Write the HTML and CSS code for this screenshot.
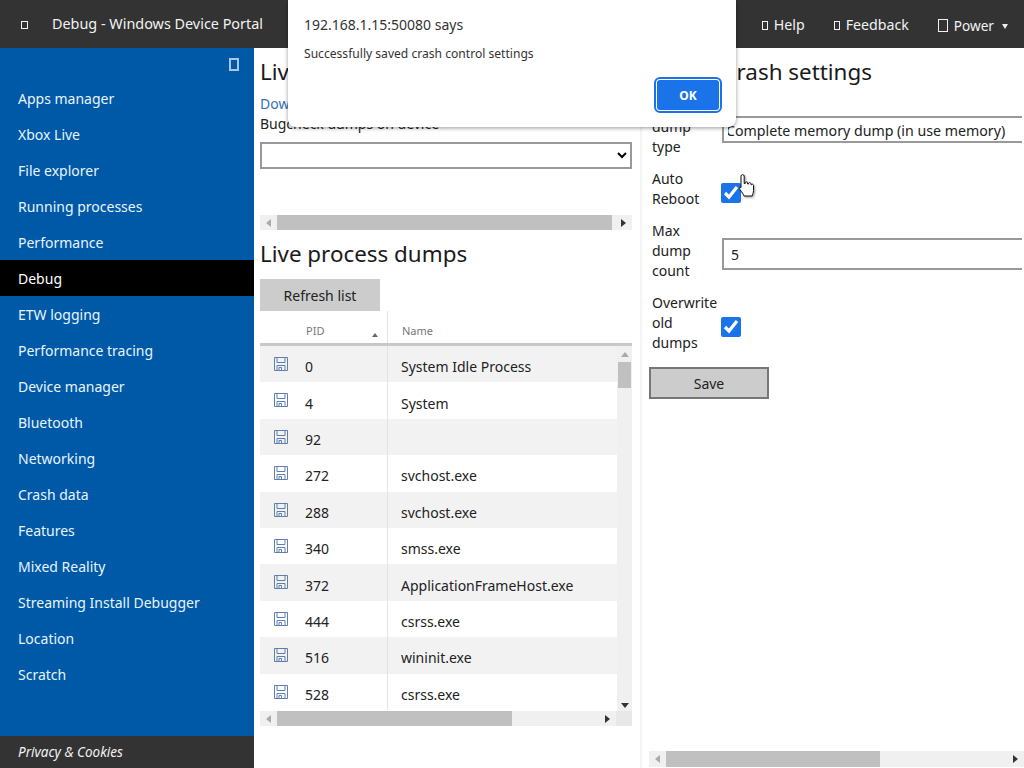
FILE: index.html
```html
<!DOCTYPE html>
<html lang="en">
<head>
<meta charset="utf-8">
<title>Debug - Windows Device Portal</title>
<link rel="stylesheet" href="styles.css">
</head>
<body>
<div class="app">
  <header class="topbar">
    <span class="tofu tofu-logo"></span>
    <span class="title">Debug - Windows Device Portal</span>
    <nav class="topnav">
      <span class="topitem"><span class="tofu tofu-small"></span>Help</span>
      <span class="topitem"><span class="tofu tofu-small"></span>Feedback</span>
      <span class="topitem power"><span class="tofu tofu-large"></span>Power<span class="caret"></span></span>
    </nav>
  </header>
  <div class="body">
    <aside class="sidebar">
      <div class="collapse"><span class="tofu tofu-collapse"></span></div>
      <ul class="menu">
        <li>Apps manager</li>
        <li>Xbox Live</li>
        <li>File explorer</li>
        <li>Running processes</li>
        <li>Performance</li>
        <li class="active">Debug</li>
        <li>ETW logging</li>
        <li>Performance tracing</li>
        <li>Device manager</li>
        <li>Bluetooth</li>
        <li>Networking</li>
        <li>Crash data</li>
        <li>Features</li>
        <li>Mixed Reality</li>
        <li>Streaming Install Debugger</li>
        <li>Location</li>
        <li>Scratch</li>
      </ul>
      <div class="privacy">Privacy &amp; Cookies</div>
    </aside>
    <main class="main">
      <div class="col-left">
        <section class="kernel">
          <h2>Live kernel dumps</h2>
          <a class="link">Download live kernel dump</a>
          <div class="field-label">Bugcheck dumps on device</div>
          <select class="select-wide"><option></option></select>
          <div class="hscroll hscroll-kernel">
            <span class="arrow arrow-left"></span>
            <span class="thumb"></span>
            <span class="arrow arrow-right"></span>
          </div>
        </section>
        <section class="process">
          <h2>Live process dumps</h2>
          <button class="btn">Refresh list</button>
          <div class="thead">
            <div class="th th-pid"><span>PID</span><span class="sort"></span></div>
            <div class="th th-name">Name</div>
          </div>
          <div class="tbody">
            <div class="rows">
              <div class="row"><div class="c-pid"><svg class="save"><use href="#floppy"/></svg>0</div><div class="c-name">System Idle Process</div></div>
              <div class="row"><div class="c-pid"><svg class="save"><use href="#floppy"/></svg>4</div><div class="c-name">System</div></div>
              <div class="row"><div class="c-pid"><svg class="save"><use href="#floppy"/></svg>92</div><div class="c-name"></div></div>
              <div class="row"><div class="c-pid"><svg class="save"><use href="#floppy"/></svg>272</div><div class="c-name">svchost.exe</div></div>
              <div class="row"><div class="c-pid"><svg class="save"><use href="#floppy"/></svg>288</div><div class="c-name">svchost.exe</div></div>
              <div class="row"><div class="c-pid"><svg class="save"><use href="#floppy"/></svg>340</div><div class="c-name">smss.exe</div></div>
              <div class="row"><div class="c-pid"><svg class="save"><use href="#floppy"/></svg>372</div><div class="c-name">ApplicationFrameHost.exe</div></div>
              <div class="row"><div class="c-pid"><svg class="save"><use href="#floppy"/></svg>444</div><div class="c-name">csrss.exe</div></div>
              <div class="row"><div class="c-pid"><svg class="save"><use href="#floppy"/></svg>516</div><div class="c-name">wininit.exe</div></div>
              <div class="row"><div class="c-pid"><svg class="save"><use href="#floppy"/></svg>528</div><div class="c-name">csrss.exe</div></div>
            </div>
            <div class="vscroll">
              <span class="arrow arrow-up"></span>
              <span class="vthumb"></span>
              <span class="arrow arrow-down"></span>
            </div>
          </div>
          <div class="hscroll hscroll-table">
            <span class="arrow arrow-left"></span>
            <span class="thumb"></span>
            <span class="arrow arrow-right"></span>
            <span class="corner"></span>
          </div>
        </section>
      </div>
      <div class="col-right">
        <section class="settings">
          <h2>Kernel crash settings</h2>
          <div class="form-row">
            <label class="form-label">Crash dump type</label>
            <select class="form-select"><option>Complete memory dump (in use memory)</option></select>
          </div>
          <div class="form-row">
            <label class="form-label">Auto Reboot</label>
            <input class="check" type="checkbox" checked>
          </div>
          <div class="form-row">
            <label class="form-label">Max dump count</label>
            <input class="form-input" type="text" value="5">
          </div>
          <div class="form-row">
            <label class="form-label">Overwrite old dumps</label>
            <input class="check" type="checkbox" checked>
          </div>
          <button class="btn btn-save">Save</button>
        </section>
        <div class="hscroll hscroll-page">
          <span class="arrow arrow-left"></span>
          <span class="thumb"></span>
          <span class="arrow arrow-right"></span>
        </div>
      </div>
    </main>
  </div>
</div>

<div class="dialog" role="alertdialog">
  <div class="dialog-origin">192.168.1.15:50080 says</div>
  <div class="dialog-msg">Successfully saved crash control settings</div>
  <div class="dialog-actions"><button class="ok">OK</button></div>
</div>

<svg class="cursor" viewBox="0 0 15 26" width="15" height="26">
  <path d="M2 2c0-1.800 3.200-1.800 3.200 0v7.500l1 .1V8.800c0-1.200 2.300-1.200 2.400 0v1.200l.9.100V9.500c0-1.200 2.300-1.100 2.400.1v1l.7.100c.9-.9 1.900-.3 1.900.8v5c0 2.500-1 3.500-1.300 5.500H5C4.500 20 3 18.500 1 15.500c-1-1.500.2-2.800 1-1.800V2z" fill="#fff" stroke="#111" stroke-width="1"/>
</svg>

<svg class="defs" width="0" height="0">
  <symbol id="floppy" viewBox="0 0 14 14">
    <path d="M.5.5h13v13H.5z M3 .5v5h8v-5 M3 13.500V8.500h8v5 M5 13.500v-3h2.500v3" fill="none" stroke="#5f7fae" stroke-width="1"/>
  </symbol>
</svg>
</body>
</html>
```
FILE: styles.css
```css
* { box-sizing: border-box; }
html, body { margin: 0; height: 100%; overflow: hidden; }
body {
  position: relative;
  font-family: "Noto Sans", "Open Sans", sans-serif;
  font-size: 14px;
  line-height: 20px;
  color: #222;
  background: #fff;
}
.app { display: flex; flex-direction: column; height: 768px; }

.topbar {
  flex: 0 0 48px;
  display: flex;
  align-items: center;
  background: #333;
  color: #f2f2f2;
}
.tofu { display: inline-block; border: 1px solid currentColor; flex: none; }
.tofu-logo { width: 7px; height: 8px; margin: 2px 0 0 21px; }
.title { margin-left: 24px; font-size: 14.400px; }
.topnav { display: flex; margin-left: auto; align-items: center; padding-top: 2px; }
.topitem { display: flex; align-items: center; font-size: 14.200px; margin-right: 29px; }
.tofu-small { width: 6px; height: 9px; margin-right: 6px; }
.tofu-large { width: 10px; height: 13px; margin-right: 6px; margin-top: -2px; border-width: 1.500px; }
.power { margin-right: 16px; padding-top: 2px; font-size: 13.600px; }
.caret {
  width: 0; height: 0;
  margin-left: 8px;
  border-left: 3.500px solid transparent;
  border-right: 3.500px solid transparent;
  border-top: 5px solid #eee;
}

.body { flex: 1; display: flex; min-height: 0; }
.sidebar {
  flex: 0 0 254px;
  display: flex;
  flex-direction: column;
  background: #0059a6;
  color: #e8f4ff;
}
.collapse { height: 32px; display: flex; justify-content: flex-end; padding: 10px 15px 0 0; }
.tofu-collapse { width: 10px; height: 13px; border: 2px solid #a9c6e3; }
.menu { list-style: none; margin: 0; padding: 0; flex: 1; }
.menu li { height: 36px; line-height: 38px; padding-left: 18px; }
.menu li.active { background: #000; color: #fff; }
.privacy {
  height: 32px;
  line-height: 32px;
  padding-left: 18px;
  background: #333;
  color: #f2f2f2;
  font-style: italic;
  font-size: 13.500px;
}

.main { flex: 1; display: flex; min-width: 0; }
h2 { margin: 0; font-weight: 400; font-size: 22.400px; line-height: 32px; color: #1a1a1a; }
.col-left { flex: 0 0 386px; padding: 8px 0 0 6px; }
.kernel, .process { width: 372px; }
.link { display: block; margin-top: 6px; color: #2f72b8; }
.select-wide {
  display: block;
  width: 372px;
  height: 27px;
  margin-top: 8px;
  border: 2px solid #999;
  background: #fff;
  font: inherit;
}
.hscroll { display: flex; align-items: center; background: #f0f0f0; }
.hscroll-kernel { margin-top: 46px; height: 15px; }
.hscroll-kernel .thumb { width: 335px; }
.thumb { height: 100%; background: #c0c0c0; }
.arrow { width: 0; height: 0; flex: none; }
.arrow-left {
  margin: 0 6px 0 6px;
  border-top: 4px solid transparent;
  border-bottom: 4px solid transparent;
  border-right: 5px solid #aaa;
}
.arrow-right {
  margin-left: auto;
  margin-right: 6px;
  border-top: 4px solid transparent;
  border-bottom: 4px solid transparent;
  border-left: 5px solid #333;
}
.process { margin-top: 8px; }
.btn {
  display: block;
  width: 120px;
  height: 32px;
  margin-top: 9px;
  padding: 1px 0 0;
  border: 0;
  background: #ccc;
  color: #222;
  font: inherit;
}
.thead { display: flex; height: 35px; border-bottom: 3px solid #c8c8c8; font-size: 11px; color: #777; }
.th { display: flex; align-items: center; padding-top: 8px; }
.th-pid { position: relative; flex: 0 0 128px; padding-left: 46px; border-right: 1px solid #e4e4e4; }
.sort {
  position: absolute;
  right: 9px;
  top: 22px;
  border-left: 3px solid transparent;
  border-right: 3px solid transparent;
  border-bottom: 4px solid #666;
}
.th-name { padding-left: 14px; }
.tbody { display: flex; height: 365px; overflow: hidden; }
.rows { flex: 0 0 357px; }
.row { display: flex; height: 36.400px; }
.row:nth-child(odd) { background: #f2f2f2; }
.row:nth-child(even) { background: #fff; }
.c-pid {
  position: relative;
  flex: 0 0 128px;
  padding: 11.200px 0 0 45px;
  border-right: 1px solid #e4e4e4;
}
.save { position: absolute; left: 14px; top: 11px; width: 14px; height: 14px; }
.c-name { padding: 11.200px 0 0 13px; }
.vscroll {
  flex: 1;
  display: flex;
  flex-direction: column;
  align-items: center;
  background: #f0f0f0;
}
.arrow-up {
  margin-top: 6px;
  margin-bottom: 5px;
  border-left: 4px solid transparent;
  border-right: 4px solid transparent;
  border-bottom: 5px solid #aaa;
}
.vthumb { width: 13px; height: 26px; background: #c0c0c0; }
.arrow-down {
  margin-top: auto;
  margin-bottom: 3px;
  border-left: 4px solid transparent;
  border-right: 4px solid transparent;
  border-top: 5px solid #333;
}
.hscroll-table { height: 15px; }
.hscroll-table .thumb { width: 235px; }
.corner { width: 16px; height: 100%; background: #e8e8e8; }

.col-right {
  flex: 1;
  min-width: 0;
  display: flex;
  flex-direction: column;
  border-left: 2px solid #f4f4f4;
}
.settings { flex: 1; min-height: 0; padding: 8px 0 0 10px; margin-right: 2px; overflow: hidden; }
.settings h2 { margin-bottom: 9px; }
.form-row { display: flex; align-items: center; margin-bottom: 12px; }
.form-label { flex: 0 0 70px; width: 70px; padding-right: 4px; }
.form-select, .form-input {
  flex: 0 0 320px;
  width: 320px;
  border: 2px solid #999;
  background: #fff;
  font: inherit;
  color: #222;
}
.form-select { height: 27px; margin-top: 5px; padding-top: 2px; font-size: 14.200px; text-indent: -2px; }
.form-input { height: 32px; margin-top: 6px; padding: 0 7px; }
.check {
  width: 20px;
  height: 20px;
  margin: 8px 0 0 -1px;
  accent-color: #1a73e8;
}
.btn-save { margin: 14px 0 0 -3px; border: 2px solid #777; }
.hscroll-page { flex: 0 0 16px; margin: 0 0 1px 7px; }
.hscroll-page .thumb { width: 214px; }

.dialog {
  position: absolute;
  left: 288px;
  top: 0;
  width: 448px;
  height: 127px;
  padding: 15px 16px 0;
  background: #fff;
  border-radius: 0 0 8px 8px;
  box-shadow: 0 1px 4px rgba(0,0,0,.4);
  color: #333;
}
.dialog-origin { font-size: 14px; }
.dialog-msg { margin-top: 9px; font-size: 12.100px; }
.dialog-actions { position: absolute; right: 15px; top: 78px; }
.ok {
  display: block;
  width: 66px;
  height: 34px;
  padding: 0;
  border: 2px solid #fff;
  outline: 2px solid #1a73e8;
  outline-offset: -1px;
  border-radius: 5px;
  background: #1a73e8;
  color: #fff;
  font: 700 12px "Noto Sans", sans-serif;
}
.cursor { position: absolute; left: 739px; top: 174px; filter: drop-shadow(1px 1px 1px rgba(0,0,0,.4)); }
.defs { position: absolute; }
```
